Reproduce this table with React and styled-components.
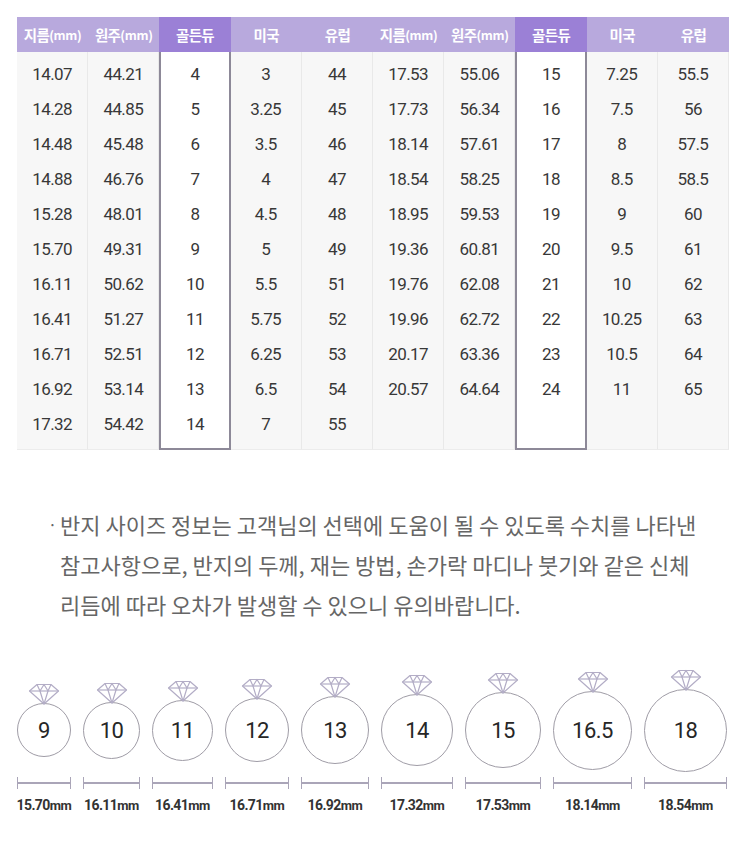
import React from "react";
import styled, { createGlobalStyle } from "styled-components";

const GlobalStyle = createGlobalStyle`
  html, body { margin: 0; padding: 0; background: #ffffff; }
  body { font-family: "Noto Sans CJK KR", "Noto Sans", sans-serif; }
  * { box-sizing: border-box; }
`;

const NUM_FONT = `"Roboto", "Noto Sans", sans-serif`;
const KR_FONT = `"Noto Sans CJK KR", "Noto Sans", sans-serif`;

const Page = styled.div`
  width: 750px;
  padding: 17px 0 0 17px;
`;

const Table = styled.div`
  display: flex;
  width: 712px;
`;

const Column = styled.div`
  flex: 1 1 0;
  display: flex;
  flex-direction: column;
  min-width: 0;
`;

const HeadCell = styled.div`
  height: 35px;
  display: flex;
  align-items: center;
  justify-content: center;
  background: ${(p) => (p.$hl ? "#9b80d6" : "#b8a9dd")};
  color: #ffffff;
  font-family: ${KR_FONT};
  font-weight: 700;
  font-size: 14.5px;
  letter-spacing: -0.6px;
  white-space: nowrap;
`;

const Unit = styled.span`
  font-size: 12.5px;
  font-weight: 700;
  letter-spacing: -0.3px;
`;

const Body = styled.div`
  flex: 1;
  display: flex;
  flex-direction: column;
  padding: 4px 0 7px;
  background: ${(p) => (p.$hl ? "#ffffff" : "#f7f7f7")};
  border-right: ${(p) => (p.$hl ? "2px solid #8d8998" : "1px solid #e9e9e9")};
  border-left: ${(p) => (p.$hl ? "2px solid #8d8998" : "none")};
  border-bottom: ${(p) => (p.$hl ? "2px solid #8d8998" : "1px solid #ececec")};
`;

const ValueCell = styled.div`
  height: 35px;
  display: flex;
  align-items: center;
  justify-content: center;
  font-family: ${NUM_FONT};
  font-size: 17px;
  letter-spacing: -0.6px;
  color: #383838;
`;

const Note = styled.div`
  display: flex;
  margin: 54px 0 0 31px;
  font-family: ${KR_FONT};
  font-size: 22px;
  line-height: 40px;
  color: #666666;
`;

const Bullet = styled.span`
  width: 12px;
  flex: none;
  font-size: 16px;
`;

const NoteText = styled.p`
  margin: 0;
  white-space: nowrap;
`;

const Rings = styled.div`
  display: flex;
  gap: 12px;
  margin-top: 61px;
`;

const RingItem = styled.div`
  width: ${(p) => p.$d}px;
  display: flex;
  flex-direction: column;
  align-items: center;
`;

const RingArea = styled.div`
  height: 90px;
  display: flex;
  align-items: center;
  justify-content: center;
`;

const Ring = styled.div`
  position: relative;
  width: ${(p) => p.$d}px;
  height: ${(p) => p.$d}px;
  border-radius: 50%;
  border: 1.5px solid #9f9ca6;
  display: flex;
  align-items: center;
  justify-content: center;
  font-family: ${NUM_FONT};
  font-size: 22px;
  letter-spacing: -0.5px;
  color: #262626;
`;

const Gem = styled.svg`
  position: absolute;
  left: 50%;
  bottom: 100%;
  transform: translateX(-50%);
  margin-bottom: -1px;
`;

const BarWrap = styled.div`
  width: 100%;
  display: flex;
  align-items: center;
  border-left: 1.5px solid #aaa5b8;
  border-right: 1.5px solid #aaa5b8;
  margin-top: 2px;
  height: 12px;
`;

const BarLine = styled.div`
  flex: 1;
  height: 1.5px;
  background: #aaa5b8;
`;

const SizeLabel = styled.div`
  margin-top: 7px;
  line-height: 18px;
  font-family: ${NUM_FONT};
  font-weight: 700;
  font-size: 14px;
  letter-spacing: -0.6px;
  color: #333333;
  white-space: nowrap;
`;

const SmallUnit = styled.span`
  font-size: 13px;
  letter-spacing: -0.4px;
`;

const columns = [
  { head: "지름", unit: "(mm)", values: ["14.07","14.28","14.48","14.88","15.28","15.70","16.11","16.41","16.71","16.92","17.32"] },
  { head: "원주", unit: "(mm)", values: ["44.21","44.85","45.48","46.76","48.01","49.31","50.62","51.27","52.51","53.14","54.42"] },
  { head: "골든듀", hl: true, values: ["4","5","6","7","8","9","10","11","12","13","14"] },
  { head: "미국", values: ["3","3.25","3.5","4","4.5","5","5.5","5.75","6.25","6.5","7"] },
  { head: "유럽", values: ["44","45","46","47","48","49","51","52","53","54","55"] },
  { head: "지름", unit: "(mm)", values: ["17.53","17.73","18.14","18.54","18.95","19.36","19.76","19.96","20.17","20.57"] },
  { head: "원주", unit: "(mm)", values: ["55.06","56.34","57.61","58.25","59.53","60.81","62.08","62.72","63.36","64.64"] },
  { head: "골든듀", hl: true, values: ["15","16","17","18","19","20","21","22","23","24"] },
  { head: "미국", values: ["7.25","7.5","8","8.5","9","9.5","10","10.25","10.5","11"] },
  { head: "유럽", values: ["55.5","56","57.5","58.5","60","61","62","63","64","65"] },
];

const rings = [
  { size: "9", d: 54, mm: "15.70" },
  { size: "10", d: 57, mm: "16.11" },
  { size: "11", d: 61, mm: "16.41" },
  { size: "12", d: 64, mm: "16.71" },
  { size: "13", d: 68, mm: "16.92" },
  { size: "14", d: 72, mm: "17.32" },
  { size: "15", d: 76, mm: "17.53" },
  { size: "16.5", d: 79, mm: "18.14" },
  { size: "18", d: 83, mm: "18.54" },
];

function Diamond() {
  return (
    <Gem width="32" height="22" viewBox="0 0 32 22" fill="none" stroke="#b3adc6" strokeWidth="1.2" strokeLinejoin="round">
      <path d="M9 1.5 H23 L30.5 8 L16 21 L1.5 8 Z" />
      <path d="M1.5 8 H30.5" />
      <path d="M9 1.5 L12 8 L16 1.5 L20 8 L23 1.5" />
      <path d="M12 8 L16 21 L20 8" />
    </Gem>
  );
}

export default function App() {
  return (
    <>
      <GlobalStyle />
      <Page>
        <Table>
          {columns.map((c, i) => (
            <Column key={i}>
              <HeadCell $hl={c.hl}>
                {c.head}
                {c.unit && <Unit>{c.unit}</Unit>}
              </HeadCell>
              <Body $hl={c.hl}>
                {c.values.map((v, j) => (
                  <ValueCell key={j}>{v}</ValueCell>
                ))}
              </Body>
            </Column>
          ))}
        </Table>

        <Note>
          <Bullet>·</Bullet>
          <NoteText>
            반지 사이즈 정보는 고객님의 선택에 도움이 될 수 있도록 수치를 나타낸
            <br />
            참고사항으로, 반지의 두께, 재는 방법, 손가락 마디나 붓기와 같은 신체
            <br />
            리듬에 따라 오차가 발생할 수 있으니 유의바랍니다.
          </NoteText>
        </Note>

        <Rings>
          {rings.map((r) => (
            <RingItem key={r.size} $d={r.d}>
              <RingArea>
                <Ring $d={r.d}>
                  <Diamond />
                  {r.size}
                </Ring>
              </RingArea>
              <BarWrap>
                <BarLine />
              </BarWrap>
              <SizeLabel>
                {r.mm}
                <SmallUnit>mm</SmallUnit>
              </SizeLabel>
            </RingItem>
          ))}
        </Rings>
      </Page>
    </>
  );
}
